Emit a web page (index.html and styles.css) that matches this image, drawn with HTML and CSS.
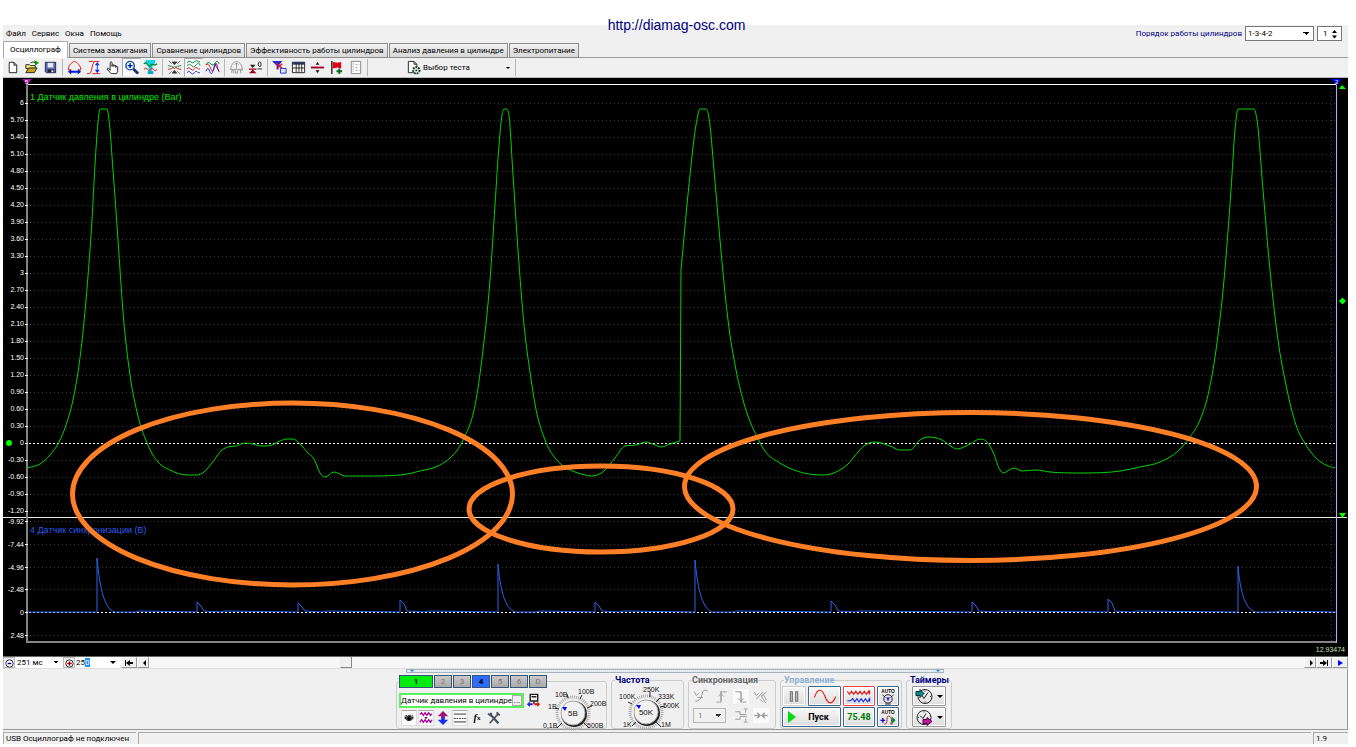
FILE: index.html
```html
<!DOCTYPE html>
<html lang="ru">
<head>
<meta charset="utf-8">
<title>USB Осциллограф</title>
<link rel="stylesheet" href="styles.css">
</head>
<body>
<header class="banner"><a class="site" href="#">http://diamag-osc.com</a></header>
<main class="window">
  <div class="top">
    <div class="top-left">
      <nav class="menu"><button>Файл</button><button>Сервис</button><button>Окна</button><button>Помощь</button></nav>
      <div class="tabs" role="tablist">
        <button class="tab active" role="tab">Осциллограф</button>
        <button class="tab" role="tab">Система зажигания</button>
        <button class="tab" role="tab">Сравнение цилиндров</button>
        <button class="tab" role="tab">Эффективность работы цилиндров</button>
        <button class="tab" role="tab">Анализ давления в цилиндре</button>
        <button class="tab" role="tab">Электропитание</button>
      </div>
    </div>
    <div class="order">
      <label for="order">Порядок работы цилиндров</label>
      <select id="order" class="box order-select"><option>1-3-4-2</option></select>
      <div class="spin box"><input aria-label="Номер цилиндра" value="1"><svg width="7" height="10" viewBox="0 0 7 10"><path d="M1 4l2.500-3L6 4zM1 6.500h5L3.500 9.500z"/></svg></div>
    </div>
  </div>

  <div class="toolbar">
    <button class="tool" aria-label="Новый"><svg viewBox="0 0 16 16"><path class="k" fill="#fff" d="M4.500 2.500h5l3 3v8h-8zM9.500 2.500v3h3"/></svg></button>
    <button class="tool" aria-label="Открыть"><svg viewBox="0 0 16 16"><path d="M2 5h4l1 1h5v3H2z" fill="#ffe97a" stroke="#222"/><path d="M2 13.500L5 8.500h9l-3 5z" fill="#c9a21a" stroke="#222"/><path d="M7 3q3-2 5 0" fill="none" stroke="#222"/><path d="M11 0l5 3-4 3z" fill="#00a000"/></svg></button>
    <button class="tool" aria-label="Сохранить"><svg viewBox="0 0 16 16"><path d="M2.500 2.500h11v11h-10l-1-1z" fill="#5b6bb5" stroke="#1c2455"/><path d="M5 3h6v5H5z" fill="#e6e9f5"/><path d="M5 10h7v3H5z" fill="#222"/><path d="M9 11h2v2H9z" fill="#fff"/></svg></button>
    <span class="sep"></span>
    <button class="tool" aria-label="Масштаб по ширине"><svg viewBox="0 0 16 16"><path class="r" d="M1.500 10.500V8.500C3 4 6 2 8 1.500c2 .5 5 2.500 6.500 7v2M1 10.500h3M12 10.500h3"/><path d="M1 12.500L4.500 9.500v2h7v-2l3.500 3-3.500 3v-2h-7v2z" fill="#0018c8"/></svg></button>
    <button class="tool" aria-label="Масштаб по высоте"><svg viewBox="0 0 16 16"><path class="r" d="M1 14.500h3C7 12 6 4 9 1.500h5M3 1.500h5M7 14.500h8"/><path d="M12 2l2.500 3.500h-2v5h2L12 14l-2.500-3.500h2v-5h-2z" fill="#0036e8"/></svg></button>
    <button class="tool" aria-label="Рука"><svg viewBox="0 0 16 16"><path class="k" fill="#fff" d="M5.500 9V2.500q1-1.500 2 0V7 5.500q1-1 2 0V7 6q1-1 2 0v2-1q1.500-1 2 .5V12l-1 2.500h-6L2 9.500q1-1.500 2-.5l1.500 2z"/></svg></button>
    <button class="tool pressed" aria-label="Лупа"><svg viewBox="0 0 16 16"><circle cx="6.500" cy="6" r="4.500" fill="#d9f1ff" stroke="#1d4e94" stroke-width="1.500"/><path d="M4 6h5M6.500 3.500v5" stroke="#0020a0" stroke-width="1.500"/><path d="M10 9.500l5 5" stroke="#17336c" stroke-width="3"/></svg></button>
    <button class="tool" aria-label="Фильтр"><svg viewBox="0 0 16 16"><path d="M3 0h10v3l-3 4v7H6V7L3 3z" fill="#0ed4e6"/><path d="M5 12h6v3H5z" fill="#08a5cc"/><path class="r" d="M1 10q2-3 4 0t3 0 3 0 4 0"/><path class="g" d="M1 4q2-2 4 1t3 1 3-1 4-1" stroke-width="1.500"/></svg></button>
    <span class="sep"></span>
    <button class="tool" aria-label="Сжать каналы"><svg viewBox="0 0 16 16"><path class="r" d="M1 10q4 0 7-3 3 3 7 3"/><path class="g" d="M1 6q4 0 7 3 3-3 7-3"/><path d="M5.500 2l2.500 3 2.500-3zM5.500 14L8 11l2.500 3zM2 1l3 3M14 1l-3 3M2 15l3-3M14 15l-3-3" fill="#333" stroke="#333" stroke-width=".7"/></svg></button>
    <button class="tool pressed" aria-label="Раздельно"><svg viewBox="0 0 16 16"><path class="g" d="M1 3q2-3 4-1t4 0 3-1 3 1M1 6q3-3 5 0t5-1 4 1"/><path class="r" d="M1 9.500q2-3 4 0t4 0 3-1 3 1"/><path class="b" d="M1 13.500q2-3 4 0t4 0 3-1 3 1"/></svg></button>
    <button class="tool" aria-label="Вместе"><svg viewBox="0 0 16 16"><path class="g" d="M1 5q2-4 5-1t5-1 4 1"/><path class="r" d="M1 5q3-2 5 4t4-1 3-2 2 7"/><path class="b" d="M1 12q2-6 4 0t4-2 2-6 4 8"/></svg></button>
    <span class="sep"></span>
    <button class="tool off" aria-label="Авто"><svg viewBox="0 0 16 16"><path d="M2 10C2 5 5 2 8 1.500 11 2 14 5 14 10M1 10h14M8 3v6M6 5l2-2 2 2M3 14v-3h2v3M7 11v3h2v-3M11 11h3M12.500 11v3" fill="none" stroke="#999"/></svg></button>
    <button class="tool" aria-label="Нулевой уровень"><svg viewBox="0 0 16 16"><path d="M1 14h8l-4-4zM1 9h8v1.500H1z" fill="#a00018"/><path d="M2 5h6L5 8.500z" fill="#222"/><path class="k" d="M10 9.500h5"/><ellipse class="k" cx="12.500" cy="4.500" rx="1.500" ry="2.500"/></svg></button>
    <span class="sep"></span>
    <button class="tool" aria-label="Выделение"><svg viewBox="0 0 16 16"><path d="M0 1h11L7 6v4H5V6z" fill="#1b2ccf"/><path d="M4 3l7 6M11 4L5 9" stroke="#e01030" stroke-width="1.500"/><path d="M9 9h6v5H9z" fill="#dfe6ff" stroke="#1b2ccf"/></svg></button>
    <button class="tool" aria-label="Таблица"><svg viewBox="0 0 16 16"><path d="M1.500 2.500h13v11h-13z" fill="#fff" stroke="#222"/><path d="M1 2h14v3H1z" fill="#2b3c68"/><path class="k" d="M5.500 3v10M8.500 3v10M11.500 3v10M2 8.500h12"/></svg></button>
    <button class="tool" aria-label="Разделить"><svg viewBox="0 0 16 16"><path d="M1 7h14v2H1z" fill="#a0002b"/><path d="M6 5l2-3 2 3zM6 11l2 3 2-3z" fill="#111"/></svg></button>
    <button class="tool" aria-label="Метка"><svg viewBox="0 0 16 16"><path d="M3 1v14" stroke="#222" stroke-width="1.500"/><path d="M4 2l5 1 4-1v7L9 8 4 9z" fill="#e00018"/><path d="M10 9h2v2h2v2h-2v2h-2v-2H8v-2h2z" fill="#006b1b"/></svg></button>
    <button class="tool off" aria-label="Заметки"><svg viewBox="0 0 16 16"><path d="M3.500 1.500h10v13h-10z" fill="#fff" stroke="#888"/><path d="M5.500 3v10M8 5h4M8 8h3M8 11h4" stroke="#999" stroke-dasharray="2 1"/></svg></button>
    <span class="sep"></span>
    <button class="test"><svg viewBox="0 0 16 16"><path class="k" fill="#fff" d="M2.500 1.500h6l3 3v9h-9zM8.500 1.500v3h3"/><circle cx="11" cy="11" r="3.500" fill="#cfe0d2" stroke="#24402b" stroke-width="2" stroke-dasharray="2 1"/><circle cx="11" cy="11" r="1" fill="#24402b"/></svg><span>Выбор теста</span><i class="caret"></i></button>
    <span class="sep"></span>
  </div>

  <svg class="scope" id="scope" viewBox="3 78 1345 578" role="img" aria-label="Осциллограмма">
    <path class="axis-top" d="M27 84.500H1336"/>
    <g id="grid"></g>
    <path class="divider" d="M3 517.500H1347"/>
    <path class="frame" d="M27 84V642H1336"/>
    <path class="zero" d="M29 443.500H1336M29 612.500H1336"/>
    <path class="cursor-line" d="M1336.500 84V643"/>
    <path class="purple" d="M22 79h10l-5 6z"/><path class="blue-mark" d="M1331 79h11l-5.500 6z"/>
    <text class="mark" x="25" y="84">5</text><text class="mark" x="1335" y="84">2</text>
    <path class="lime" d="M1339 89l3-4 4 4zM1339 513h7l-3.500 5zM1339 301l3.500-3.500 3.500 3.500-3.500 3.500z"/>
    <circle class="lime" cx="9" cy="443" r="3"/>
    <text class="name green" x="30" y="100">1 Датчик давления в цилиндре (Bar)</text>
    <text class="name blue" x="30" y="533">4 Датчик синхронизации (В)</text>
    <g id="labels"></g>
    <path id="pressure" class="trace pressure"/>
    <path id="sync" class="trace sync"/>
    <g class="notes"><ellipse cx="292.500" cy="494" rx="220" ry="91"/><ellipse cx="601" cy="509" rx="132" ry="43"/><ellipse cx="970.500" cy="486.500" rx="286" ry="74"/></g>
    <text class="time" x="1345" y="652">12.93474</text>
  </svg>

  <div class="scroll">
    <button class="round" aria-label="Уменьшить"><svg viewBox="0 0 12 12"><circle cx="6" cy="6" r="4" fill="#fff" stroke="#223"/><path d="M4 6h4" stroke="#00a" stroke-width="1.500"/></svg></button>
    <select class="flat" aria-label="Развёртка"><option>251 мс</option></select>
    <button class="round" aria-label="Увеличить"><svg viewBox="0 0 12 12"><circle cx="6" cy="6" r="4" fill="#fff" stroke="#223"/><path d="M3.500 6h5M6 3.500v5" stroke="#b00" stroke-width="1.500"/></svg></button>
    <div class="combo"><span>25<mark>0</mark></span><i class="caret"></i></div>
    <button class="nav" aria-label="В начало"><svg viewBox="0 0 12 8"><path d="M2 1h1v6H2zM3 4l4-3v2h3v2H7v2z"/></svg></button>
    <button class="nav small" aria-label="Назад"><svg viewBox="0 0 12 8"><path d="M8 1v6L5 4z"/></svg></button>
    <div class="track"><button class="thumb" aria-label="Прокрутка"></button></div>
    <button class="nav small" aria-label="Вперёд"><svg viewBox="0 0 12 8"><path d="M5 1v6l3-3z"/></svg></button>
    <button class="nav" aria-label="В конец"><svg viewBox="0 0 12 8"><path d="M9 1h1v6H9zM9 4L5 1v2H2v2h3v2z"/></svg></button>
    <button class="nav" aria-label="Воспроизвести"><svg viewBox="0 0 12 8"><path d="M4 1v6l5-3z" fill="#00f"/></svg></button>
  </div>

  <section class="panel">
    <div class="splitter"><i></i><i></i></div>
    <div class="groups">
      <fieldset class="group channels">
        <legend class="chan-tabs"><button class="ch one">1</button><button class="ch">2</button><button class="ch">3</button><button class="ch four">4</button><button class="ch">5</button><button class="ch">6</button><button class="ch">D</button></legend>
        <div class="ch-left">
          <div class="ch-row"><div class="ch-name"><input aria-label="Датчик" value="Датчик давления в цилиндре"><button aria-label="Выбрать датчик">...</button></div>
            <svg class="probe" viewBox="0 0 16 16"><path d="M4.500 1.500h8v7h-8zM6 4h5M8.500 9v3" fill="none" stroke="#222" stroke-width="1.500"/><path d="M1 12l3-3v2h3v2H4v2z" fill="#2020d0"/><path d="M15 12l-3-3v2H9v2h3v2z" fill="#e01010"/></svg></div>
          <div class="ch-icons">
            <button class="mini pressed" aria-label="Видимость"><svg viewBox="0 0 16 16"><path d="M3 8q5-4 10 0-5 6-10 0z" fill="#555" stroke="#111"/><circle cx="8" cy="8.500" r="2"/><path d="M3 6l3-1M7 5h3M11 5l2 1" stroke="#111"/></svg></button>
            <button class="mini pressed" aria-label="Сглаживание"><svg viewBox="0 0 16 16"><path d="M1 4l2-2 2 3 2-3 2 3 2-3 2 3 2-2M1 13l2-3 2 3 2-3 2 3 2-3 2 3 2-3" fill="none" stroke="#a0009a" stroke-width="1.500"/><path d="M6 7h4L8 9z"/></svg></button>
            <button class="mini" aria-label="Инверсия"><svg viewBox="0 0 16 16"><path d="M8 0l6 6h-4v2H6V6H2z" fill="#a01070"/><path d="M8 16l6-6h-4V7H6v3H2z" fill="#1730f0"/></svg></button>
            <button class="mini pressed" aria-label="Линии"><svg viewBox="0 0 16 16"><path class="k" d="M1 3.500h14M1 12.500h14"/><path class="k" d="M1 8.500h14" stroke-dasharray="2 1"/></svg></button>
            <button class="mini fx" aria-label="Функция"><i>f</i><sub>x</sub></button>
            <button class="mini" aria-label="Настройки"><svg viewBox="0 0 16 16"><path d="M3 3l10 11" stroke="#34506f" stroke-width="2.500"/><path d="M13 3L3 14" stroke="#555" stroke-width="2"/><path d="M1 3l3 2 1-3M11 1.500L14.500 5" stroke="#446" stroke-width="2" fill="none"/></svg></button>
          </div>
        </div>
        <svg class="knob" viewBox="543 686 63 43" width="63" height="43">
          <g class="ticks"><circle cx="573" cy="711" r="16"/></g>
          <path class="k" d="M562 721l-5 5M584 721l5 5M559 707l-4-1M568 696l-1-4M580 697l2-4M587 706l5-2"/>
          <circle cx="574" cy="712" r="13" fill="#222"/><circle cx="573" cy="711" r="12" fill="#f1f1f1" stroke="#aaa"/>
          <path d="M562 705h5l-2 4z" fill="#00f"/><text class="val" x="573" y="714">5В</text>
          <text x="555" y="695">10В</text><text x="578" y="692">100В</text><text x="548" y="707">1В</text><text x="590" y="704">200В</text><text x="543" y="726">0,1В</text><text x="587" y="726">500В</text>
        </svg>
      </fieldset>
      <fieldset class="group freq"><legend class="navy">Частота</legend>
        <svg class="knob" viewBox="615 684 68 45" width="68" height="45">
          <g class="ticks"><circle cx="646" cy="711" r="16"/></g>
          <path class="k" d="M636 721l-4 4M656 721l5 5M632 703l-4-2M650 696v-5M656 701l4-4M660 706l5-1"/>
          <circle cx="647" cy="712" r="13" fill="#222"/><circle cx="646" cy="711" r="12" fill="#f1f1f1" stroke="#aaa"/>
          <path d="M636 704h5l-2 4z" fill="#00f"/><text class="val" x="646" y="714">50K</text>
          <text x="643" y="691">250K</text><text x="619" y="698">100K</text><text x="658" y="698">333K</text><text x="663" y="707">500K</text><text x="623" y="726">1K</text><text x="661" y="726">1M</text>
        </svg>
      </fieldset>
      <fieldset class="group syncbox"><legend class="gray">Синхронизация</legend>
        <div class="sync-grid">
          <svg class="si" viewBox="0 0 16 16"><path d="M1 3l2 4 3-3M2 13q6 0 7-7t6-4M4 9h6"/></svg>
          <svg class="si" viewBox="0 0 16 16"><path d="M3 14h5V3h6M8 2v11M5 8l3-3 3 3"/></svg>
          <svg class="si lit" viewBox="0 0 16 16"><path d="M2 3h6v11h6M8 3v11M5 10l3 3 3-3"/></svg>
          <svg class="si" viewBox="0 0 16 16"><path d="M1 3l2 4 3-3M3 11l7-8M8 8l6-5M8 7l5 8M7 11l3 3M10 5l4 7"/></svg>
          <select class="sync-sel" aria-label="Канал синхронизации"><option>1</option></select>
          <svg class="si" viewBox="0 0 16 16"><path d="M2 4h5v3h7M2 12h5V9h7M11 1h4M13 2v3M11 15h4M13 11v3"/></svg>
          <svg class="si lit" viewBox="0 0 16 16"><path stroke-width="1.500" d="M1 8h5M4 5l3 3-3 3M15 8h-5M12 5L9 8l3 3"/></svg>
        </div>
      </fieldset>
      <fieldset class="group control"><legend class="pale">Управление</legend>
        <div class="control-grid">
          <button class="cb dis" aria-label="Пауза"><svg viewBox="0 0 16 16"><path d="M4.500 3.500h2v9h-2zM9.500 3.500h2v9h-2z" fill="#bbb" stroke="#777"/></svg></button>
          <button class="cb wide" aria-label="Синус"><svg viewBox="0 0 24 16"><path class="r" d="M2 9C5 0 9 0 12 8s7 8 10 0"/></svg></button>
          <button class="cb redb" aria-label="Запись"><svg viewBox="0 0 24 16"><path class="r" d="M1 3l2 3 2-3 2 3 2-3 2 3 2-3 2 3 2-3 2 3 2-3 1 3V2"/><path class="b" d="M1 12h3l2-2 2 3 2-3 2 3 2-3 2 3 2-3 2 3 2-3v3"/></svg></button>
          <button class="cb" aria-label="Авто масштаб"><svg viewBox="0 0 18 18"><text x="9" y="5">AUTO</text><circle cx="9" cy="11.500" r="4.500" fill="#dde" stroke="#222"/><path d="M3 7l3 3M15 7l-3 3M6 17h6" stroke="#222"/><path d="M7 10h4l-2 4z" fill="#22c"/></svg></button>
          <button class="cb start"><i></i>Пуск</button>
          <button class="cb meter">75.48</button>
          <button class="cb" aria-label="Авто поиск"><svg viewBox="0 0 18 18"><text x="9" y="5">AUTO</text><path d="M1 12h5M3.500 9.500v5" stroke="#11c" stroke-width="1.500"/><path d="M5 16q3 0 3-5t3-3 1 8h2" fill="none" stroke="#a02020"/><path d="M13 8l4 4-4 4z" fill="#084"/></svg></button>
        </div>
      </fieldset>
      <fieldset class="group timers"><legend class="navy">Таймеры</legend>
        <div class="timer-col">
          <button class="cb" aria-label="Таймер запуска"><svg viewBox="0 0 18 16"><circle class="k" cx="10" cy="8" r="7"/><path class="k" d="M9 10l4-6M9 10l-2-3M10 2v1M15 8h1M10 13v1"/><path d="M1 3h4V1l4 4-4 4V7H1z" fill="#188" stroke="#033"/></svg><i class="caret"></i></button>
          <button class="cb" aria-label="Таймер остановки"><svg viewBox="0 0 18 16"><circle class="k" cx="9" cy="8" r="7"/><path class="k" d="M8 9l3-5M8 9L5 6M9 2v1M3 8h1"/><path d="M8 10h4V8l5 4-5 4v-2H8z" fill="#c018a0" stroke="#504"/></svg><i class="caret"></i></button>
        </div>
      </fieldset>
    </div>
  </section>
  <footer class="status"><span class="st-main">USB Осциллограф не подключен</span><span class="st-mid"></span><span class="st-ver">1.9</span></footer>
</main>
<script src="chart.js"></script>
</body>
</html>
```
FILE: styles.css
```css
* { box-sizing: border-box; }
:root { --ui: Roboto, "Liberation Sans", sans-serif; --plain: "Liberation Sans", Arial, sans-serif; }
body { margin: 0; background: #fff; color: #000; font: 8px/10px var(--ui); }
button, input, select { font: inherit; color: inherit; margin: 0; padding: 0; border: 0; border-radius: 0; background: none; appearance: none; min-width: 0; }
svg { display: block; }
legend { padding: 0; }
.banner { height: 25px; position: relative; z-index: 1; text-align: center; padding-top: 17px; padding-right: 3px; }
.site { font: 14px/16px var(--plain); color: #000080; text-decoration: none; }
.window { margin: 0 8px 0 3px; background: #f0f0f0; }
.k { fill: none; stroke: #222; } .k[fill] { fill: #fff; }
.r { fill: none; stroke: #e81010; } .g { fill: none; stroke: #008a30; } .b { fill: none; stroke: #1528e0; }
.caret { display: inline-block; border: solid transparent; border-width: 3px 3px 0; border-top-color: #000; }

.top { display: flex; justify-content: space-between; height: 33px; border-bottom: 1px solid #999; }
.top-left { display: flex; flex-direction: column; justify-content: space-between; }
.menu { display: flex; gap: 6px; padding: 4px 3px 0; }
.tabs { display: flex; align-items: flex-end; gap: 1px; margin-bottom: -1px; }
.tab { height: 15px; padding: 0 3px; background: linear-gradient(#f2f2f2, #d8d8d8); border: 1px solid #8c8c8c; }
.tab.active { height: 17px; padding: 0 6px; background: #fff; border-bottom: 0; border-color: #aaa; }
.order { display: flex; align-items: flex-start; gap: 3px; padding: 1px 6px 0 0; color: #000080; line-height: 14px; }
.order label { padding-top: 1px; }
.box { height: 15px; border: 1px solid #777; background: #fff; color: #000; }
.order-select { width: 69px; padding-left: 2px; }
.order-select, .flat, .sync-sel { background-image: linear-gradient(to bottom left, #000 50%, transparent 50%), linear-gradient(to bottom right, #000 50%, transparent 50%); background-size: 3px 3px; background-repeat: no-repeat; background-position: right 7px center, right 4px center; }
.spin { display: flex; align-items: center; width: 25px; padding: 0 3px 0 5px; }
.spin input { width: 9px; flex: 1; }

.toolbar { display: flex; height: 20px; border-bottom: 1px solid #bbb; }
.tool { width: 19px; height: 19px; display: grid; place-items: center; border: 1px solid transparent; }
.tool svg, .test svg { width: 15px; height: 15px; }
.tool.pressed { background: #fafafa; border-color: #aaa #eee #eee #aaa; }
.sep { width: 3px; border-left: 1px solid #b5b5b5; margin: 1px 0 1px 2px; }
.test { display: flex; align-items: center; gap: 2px; width: 143px; padding: 0 3px 0 36px; }
.test .caret { margin-left: auto; border-width: 2px 2px 0; }

.scope { width: 100%; height: auto; background: #000; }
.axis-top { stroke: #fff; } .divider { stroke: #e4ece0; }
.frame { fill: none; stroke: #858585; stroke-width: 2; }
.cursor-line { stroke: #aab0ff; stroke-width: 1; }
.gridline { stroke: #373737; stroke-dasharray: 1 3; fill: none; }
.zero { stroke: #fff; stroke-dasharray: 2 2; }
.purple { fill: #a018a0; } .blue-mark { fill: #0000f0; } .lime { fill: #0f0; }
.mark { font: 6px var(--plain); fill: #fff; }
.name { font: 9px var(--plain); } .green { fill: #00e800; } .blue { fill: #2c5cee; }
.axis { font: 7px var(--plain); fill: #fff; text-anchor: end; }
.time { font: 7px var(--plain); fill: #c8e0b8; text-anchor: end; }
.trace { fill: none; stroke-width: 1; stroke-linejoin: round; }
.pressure { stroke: #00d400; } .sync { stroke: #2d62f0; }
.notes { fill: none; stroke: #ff7f27; stroke-width: 5; }

.scroll { display: flex; height: 13px; background: #f7f7f7; border-top: 1px solid #666; border-bottom: 1px solid #ddd; }
.round { width: 12px; background: #eee; border: 1px solid #bbb; display: grid; place-items: center; }
.round svg { width: 11px; height: 11px; }
.flat { width: 48px; background-color: #fff; padding-left: 2px; }
.combo { width: 46px; display: flex; align-items: center; justify-content: space-between; padding: 0 5px 0 1px; background: #fff; }
mark { background: #1e90ff; color: #fff; }
.nav { width: 16px; background: #f0f0f0; border: 1px solid #999; border-left-color: #fff; border-top-color: #fff; display: grid; place-items: center; }
.nav svg { width: 12px; height: 8px; } .nav.small { width: 12px; }
.track { flex: 1; padding-left: 14.200%; }
.thumb { display: block; width: 12px; height: 100%; background: #f0f0f0; border: 1px solid #888; border-left-color: #eee; border-top: 0; }

.panel { border-right: 1px solid #999; border-bottom: 1px solid #999; }
.splitter { width: 538px; height: 4px; margin: 0 auto; border: 1px solid #a8b4bd; background: repeating-linear-gradient(90deg, #cfe2f5 0 1px, #fff 1px 2px); display: flex; justify-content: space-between; padding: 0 3px; }
.splitter i { border: solid transparent; border-width: 2px 2px 0; border-top-color: #08f; height: 2px; }
.groups { display: flex; justify-content: center; gap: 4px; padding: 2px 2px 0 0; }
.group { height: 54px; margin: 0; padding: 0; border: 1px solid #ccc; border-radius: 3px; min-width: 0; }
.group legend { font-weight: bold; font-size: 9px; line-height: 10px; margin-left: 3px; }
.navy { color: #000080; } .gray { color: #666; } .pale { color: #8faed0; }
.channels { width: 211px; display: flex; }
.group .chan-tabs { display: flex; gap: 1px; margin-left: 2px; font-size: 8px; font-weight: normal; }
.ch { width: 18px; height: 13px; border: 1px solid #34567a; background: linear-gradient(#c9c9c9, #aaa); color: #777; }
.one { width: 34px; background: #00ec10; color: #000; font-weight: bold; }
.four { background: #2f6bff; color: #000; font-weight: bold; }
.ch-left { padding: 5px 0 0 2px; width: 146px; }
.ch-row { display: flex; gap: 2px; align-items: center; }
.ch-name { display: flex; width: 125px; height: 15px; border: 2px solid #5df05d; background: #fff; }
.ch-name input { flex: 1; }
.ch-name button { width: 10px; background: #f0f0f0; border: 1px solid #aaa; line-height: 6px; }
.probe { width: 15px; height: 15px; }
.ch-icons { display: flex; gap: 1px; padding: 2px 0 0 2px; }
.mini { width: 16px; height: 16px; display: grid; place-items: center; }
.mini svg { width: 14px; height: 14px; } .mini.pressed { background: #fafafa; border: 1px solid #ddd; border-top-color: #aaa; }
.fx { display: flex; justify-content: center; align-items: center; font: bold 10px/12px "Liberation Serif", serif; }
.fx sub { font-size: 7px; }
.knob { flex: none; overflow: visible; }
.knob text { font: 7px var(--plain); fill: #111; } .knob .val { font-size: 8px; text-anchor: middle; }
.ticks { fill: none; stroke: #aaa; stroke-width: 3; stroke-dasharray: 1 1; }
.freq { width: 73px; padding-left: 3px; }
.group.freq legend { margin-left: 0; }
.syncbox { width: 88px; }
.sync-grid { display: grid; grid-template-columns: repeat(4, 17px); gap: 4px 3px; padding: 4px 0 0 4px; }
.si { width: 16px; height: 15px; fill: none; stroke: #9a9a9a; } .si.lit { background: #fafafa; }
.sync-sel { grid-column: span 2; width: 33px; height: 15px; border: 1px solid #aaa; padding-left: 4px; color: #555; opacity: .8; }
.control { width: 122px; }
.control-grid { display: grid; grid-template-columns: 24px 33px 32px 22px; gap: 1px 2px; padding: 1px 1px 0; }
.cb { height: 20px; display: flex; align-items: center; justify-content: center; background: linear-gradient(#f8f8f8, #ddd); border: 1px solid #3c688c; border-radius: 1px; box-shadow: inset 0 0 0 1px #fff; }
.cb svg { width: 18px; height: 17px; } .cb svg[viewBox="0 0 24 16"] { width: 26px; }
.cb text { font: bold 5px var(--plain); text-anchor: middle; }
.dis { border-color: #ccc; } .redb { border-color: #e44; }
.start { grid-column: span 2; font-weight: bold; font-size: 9px; gap: 12px; padding-right: 6px; }
.start i { border: solid transparent; border-width: 6px 0 6px 8px; border-left-color: #00dc10; }
.meter { color: #007a00; font-weight: bold; font-size: 9px; }
.timers { width: 46px; }
.timer-col { display: flex; flex-direction: column; gap: 1px; padding: 1px 5px 0 5px; }
.timer-col .cb { gap: 4px; border-color: #999; }

.status { display: flex; height: 14px; padding-top: 2px; line-height: 11px; }
.status span { border-top: 1px solid #aaa; border-left: 1px solid #aaa; padding-left: 2px; white-space: nowrap; }
.st-main { width: 133px; } .st-mid { flex: 1; margin: 0 2px; } .st-ver { width: 35px; }
```
FILE: chart.js
```js
const NS = "http://www.w3.org/2000/svg";
function add(parent, tag, attrs, text) {
  const el = document.createElementNS(NS, tag);
  for (const k in attrs) el.setAttribute(k, attrs[k]);
  if (text !== undefined) el.textContent = text;
  document.getElementById(parent).appendChild(el);
}
for (let i = 0; i <= 24; i++) {
  const y = 103 + 17 * i, v = (60 - 3 * i) / 10;
  if (v !== 0) add("grid", "path", { class: "gridline", d: `M30 ${y + .5}H1336` });
  add("labels", "text", { class: "axis", x: 24, y: y + 2 }, v % 3 === 0 ? String(v) : v.toFixed(2));
  add("labels", "path", { d: `M25 ${y + .5}h3`, stroke: "#fff" });
}
["-9.92", "-7.44", "-4.96", "-2.48", "0", "2.48"].forEach((s, i) => {
  const y = Math.round(521 + 22.800 * i);
  if (s !== "0") add("grid", "path", { class: "gridline", d: `M30 ${y + .5}H1336` });
  add("labels", "text", { class: "axis", x: 24, y: y + 3 }, s);
  add("labels", "path", { d: `M25 ${y + .5}h3`, stroke: "#fff" });
});
add("grid", "path", { class: "gridline", d: "M1331.5 88V642" });

// Cubic interpolation between the sampled points, with tangents limited so that it never overshoots.
function curve(p) {
  const n = p.length, h = [], s = [], m = [];
  for (let i = 0; i < n - 1; i++) {
    h.push(p[i + 1][0] - p[i][0]);
    s.push((p[i + 1][1] - p[i][1]) / h[i]);
  }
  m[0] = s[0]; m[n - 1] = s[n - 2];
  for (let i = 1; i < n - 1; i++) {
    const mean = (s[i - 1] * h[i] + s[i] * h[i - 1]) / (h[i - 1] + h[i]);
    const limit = 3 * Math.min(Math.abs(s[i - 1]), Math.abs(s[i]));
    m[i] = s[i - 1] * s[i] <= 0 ? 0 : Math.sign(mean) * Math.min(Math.abs(mean), limit);
  }
  let d = `${p[0]}`;
  for (let i = 0; i < n - 1; i++) {
    const t = h[i] / 3;
    d += `C${p[i][0] + t} ${p[i][1] + m[i] * t} ${p[i + 1][0] - t} ${p[i + 1][1] - m[i + 1] * t} ${p[i + 1]}`;
  }
  return d;
}
const before = [[27,468],[40,464],[50,455],[59,442],[66,425],[73,400],[78,372],[83,332],[88,276],[92,220],[95,165],[98,122],[100,109],[107,109],[109,120],[113,170],[118,240],[123,312],[130,375],[137,412],[147,443],[158,462],[170,470],[187,475],[197,475],[204,472],[212,463],[222,450],[228,447],[236,446],[245,443],[253,444],[262,446],[272,445],[280,441],[287,439],[293,439],[300,444],[308,453],[314,459],[320,473],[325,477],[334,472],[345,476],[365,476],[400,475],[420,471],[440,465],[450,458],[463,440],[476,400],[483,350],[490,280],[495,205],[499,145],[502,115],[504,109],[507,109],[509,116],[513,175],[518,250],[524,325],[530,372],[535,404],[545,440],[555,458],[565,467],[578,473],[592,476],[604,471],[615,458],[625,446],[636,445],[646,442],[655,445],[661,447],[670,444],[680,441]];
const after = [[681,270],[683,248],[690,175],[696,125],[700,109],[706,109],[709,118],[714,170],[720,240],[728,320],[736,370],[743,400],[757,437],[765,451],[780,463],[800,472],[824,475],[836,472],[848,464],[858,452],[867,444],[875,442],[890,446],[900,450],[910,450],[920,440],[928,437],[942,440],[952,447],[957,449],[970,444],[980,439],[987,442],[993,452],[1000,470],[1003,473],[1014,468],[1022,471],[1036,470],[1050,472],[1080,473],[1120,471],[1140,467],[1160,462],[1178,451],[1190,437],[1200,420],[1208,395],[1216,350],[1224,280],[1231,190],[1235,130],[1238,109],[1254,109],[1257,120],[1263,190],[1270,270],[1278,340],[1286,385],[1296,425],[1306,445],[1316,458],[1326,465],[1335,468]];
document.getElementById("pressure").setAttribute("d", `M${curve(before)}L${curve(after)}`);

const spikes = [[97,558],[197,602],[298,603],[400,600],[498,564],[595,602],[695,560],[831,601],[972,602],[1108,599],[1238,566]];
let d = "M28 612";
for (const [x, y] of spikes) {
  d += `L${x} 612V${y}`;
  d += y < 590 ? `C${x + 2} ${y + 22} ${x + 6} 610 ${x + 18} 612H${x + 38}l4-1` : `L${x + 4} ${y + 4}L${x + 7} 611L${x + 24} 612l4-1`;
}
document.getElementById("sync").setAttribute("d", d + "L1336 612");
```
